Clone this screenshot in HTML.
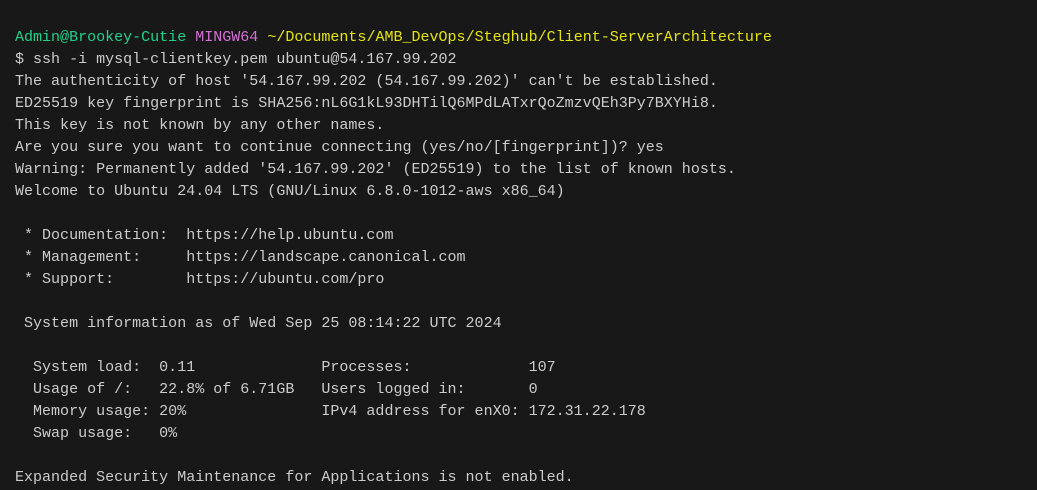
<!DOCTYPE html>
<html><head><style>
html,body{margin:0;padding:0;background:#181818;width:1037px;height:490px;overflow:hidden}
pre{margin:0;position:absolute;left:15px;top:26px;font-family:"Liberation Mono","DejaVu Sans Mono",monospace;font-size:15.03px;line-height:22px;color:#cccccc;white-space:pre}
.g{color:#23d18b}.m{color:#d670d6}.y{color:#e5e510}
</style></head><body>
<pre><span class="g">Admin@Brookey-Cutie</span> <span class="m">MINGW64</span> <span class="y">~/Documents/AMB_DevOps/Steghub/Client-ServerArchitecture</span>
$ ssh -i mysql-clientkey.pem ubuntu@54.167.99.202
The authenticity of host '54.167.99.202 (54.167.99.202)' can't be established.
ED25519 key fingerprint is SHA256:nL6G1kL93DHTilQ6MPdLATxrQoZmzvQEh3Py7BXYHi8.
This key is not known by any other names.
Are you sure you want to continue connecting (yes/no/[fingerprint])? yes
Warning: Permanently added '54.167.99.202' (ED25519) to the list of known hosts.
Welcome to Ubuntu 24.04 LTS (GNU/Linux 6.8.0-1012-aws x86_64)

 * Documentation:  https://help.ubuntu.com
 * Management:     https://landscape.canonical.com
 * Support:        https://ubuntu.com/pro

 System information as of Wed Sep 25 08:14:22 UTC 2024

  System load:  0.11              Processes:             107
  Usage of /:   22.8% of 6.71GB   Users logged in:       0
  Memory usage: 20%               IPv4 address for enX0: 172.31.22.178
  Swap usage:   0%

Expanded Security Maintenance for Applications is not enabled.</pre>
</body></html>
